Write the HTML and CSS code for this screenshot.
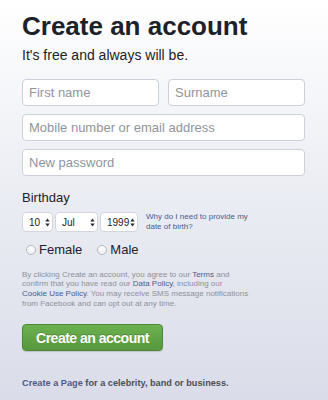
FILE: index.html
```html
<!DOCTYPE html>
<html lang="en">
<head>
<meta charset="utf-8">
<title>Create an account</title>
<link rel="stylesheet" href="styles.css">
</head>
<body>
<div class="page">
  <h1 class="title">Create an account</h1>
  <p class="subtitle">It's free and always will be.</p>

  <div class="fields">
    <div class="row">
      <div class="input">First name</div>
      <div class="input">Surname</div>
    </div>
    <div class="input">Mobile number or email address</div>
    <div class="input">New password</div>
  </div>

  <div class="birthday-label">Birthday</div>
  <div class="birthday">
    <div class="selects">
      <div class="select day"><span>10</span><svg class="arrows" width="5" height="9" viewBox="0 0 5 9"><polygon points="0.3,3.6 2.5,0.4 4.7,3.6"/><polygon points="0.3,5.4 2.5,8.6 4.7,5.4"/></svg></div>
      <div class="select month"><span>Jul</span><svg class="arrows" width="5" height="9" viewBox="0 0 5 9"><polygon points="0.3,3.6 2.5,0.4 4.7,3.6"/><polygon points="0.3,5.4 2.5,8.6 4.7,5.4"/></svg></div>
      <div class="select year"><span>1999</span><svg class="arrows" width="5" height="9" viewBox="0 0 5 9"><polygon points="0.3,3.6 2.5,0.4 4.7,3.6"/><polygon points="0.3,5.4 2.5,8.6 4.7,5.4"/></svg></div>
    </div>
    <a class="help" href="#">Why do I need to provide my<br>date of birth?</a>
  </div>

  <div class="gender">
    <label class="radio female"><span class="dot"></span>Female</label>
    <label class="radio male"><span class="dot"></span>Male</label>
  </div>

  <p class="terms">By clicking Create an account, you agree to our <a href="#">Terms</a> and<br>confirm that you have read our <a href="#">Data Policy</a>, including our<br><a href="#">Cookie Use Policy</a>. You may receive SMS message notifications<br>from Facebook and can opt out at any time.</p>

  <button class="submit" type="button">Create an account</button>

  <p class="page-link"><a href="#">Create a Page</a> for a celebrity, band or business.</p>
</div>
</body>
</html>
```

FILE: styles.css
```css
html, body {
  margin: 0;
  padding: 0;
}

body {
  width: 328px;
  height: 400px;
  overflow: hidden;
  background: linear-gradient(#ffffff 0%, #eceef4 45%, #dadde9 100%);
  font-family: "Liberation Sans", Arial, sans-serif;
  color: #1d2129;
}

.page {
  width: 283px;
  padding: 11px 23px 0 22px;
}

.title {
  margin: 0;
  font-size: 26px;
  line-height: 30px;
  font-weight: bold;
  color: #1d2129;
}

.subtitle {
  margin: 5px 0 0;
  font-size: 14px;
  line-height: 18px;
  color: #1d2129;
}

.fields {
  margin-top: 15px;
  display: flex;
  flex-direction: column;
  gap: 8px;
}

.row {
  display: flex;
  gap: 9px;
}

.row .input {
  flex: 1;
}

.input {
  box-sizing: border-box;
  height: 27px;
  border: 1px solid #ccd0d8;
  border-radius: 4px;
  background: #fff;
  padding-left: 6px;
  display: flex;
  align-items: center;
  font-size: 13px;
  color: #90949c;
}

.birthday-label {
  margin-top: 14px;
  font-size: 13px;
  line-height: 16px;
  color: #1d2129;
}

.birthday {
  margin-top: 6px;
  display: flex;
  align-items: center;
  gap: 8px;
}

.selects {
  display: flex;
  gap: 2px;
}

.select {
  box-sizing: border-box;
  height: 20px;
  border: 1px solid #d3d6de;
  border-radius: 4px;
  background: #fff;
  padding: 0 2px 0 6px;
  display: flex;
  align-items: center;
  justify-content: space-between;
  font-size: 10px;
  color: #1d2129;
}

.select.day { width: 31px; }
.select.month { width: 43px; }
.select.year { width: 38px; }

.arrows {
  display: block;
  fill: #2a2d33;
}

.help {
  font-size: 8px;
  line-height: 10px;
  color: #4b5a8e;
  text-decoration: none;
}

.gender {
  margin-top: 10px;
  height: 16px;
  display: flex;
  align-items: center;
  font-size: 13px;
  line-height: 16px;
  color: #1d2129;
}

.radio {
  display: flex;
  align-items: center;
  gap: 3px;
}

.radio.female { margin-left: 4px; }
.radio.male { margin-left: 15px; }

.dot {
  box-sizing: border-box;
  width: 10px;
  height: 10px;
  border-radius: 50%;
  border: 1px solid #b4b7bf;
  background: linear-gradient(#ffffff, #eef0f3);
}

.terms {
  margin: 11.5px 0 0;
  font-size: 8px;
  line-height: 9.7px;
  color: #8d9199;
  white-space: nowrap;
}

.terms a {
  color: #4b5a8e;
  text-decoration: none;
}

.submit {
  display: block;
  box-sizing: border-box;
  margin-top: 15.7px;
  width: 141px;
  height: 27px;
  padding: 0;
  border: 1px solid #4a8a34;
  border-radius: 4px;
  background: linear-gradient(#6cb250, #57973d);
  box-shadow: 0 1px 1px rgba(0, 0, 0, 0.15);
  font-family: "Liberation Sans", Arial, sans-serif;
  font-size: 14px;
  font-weight: bold;
  letter-spacing: -0.5px;
  color: #fff;
  text-shadow: 0 -1px 0 rgba(0, 0, 0, 0.2);
}

.page-link {
  margin: 26px 0 0;
  font-size: 9.2px;
  line-height: 12px;
  font-weight: bold;
  color: #4b4f56;
}

.page-link a {
  color: #4b5a8e;
  text-decoration: none;
}
```
